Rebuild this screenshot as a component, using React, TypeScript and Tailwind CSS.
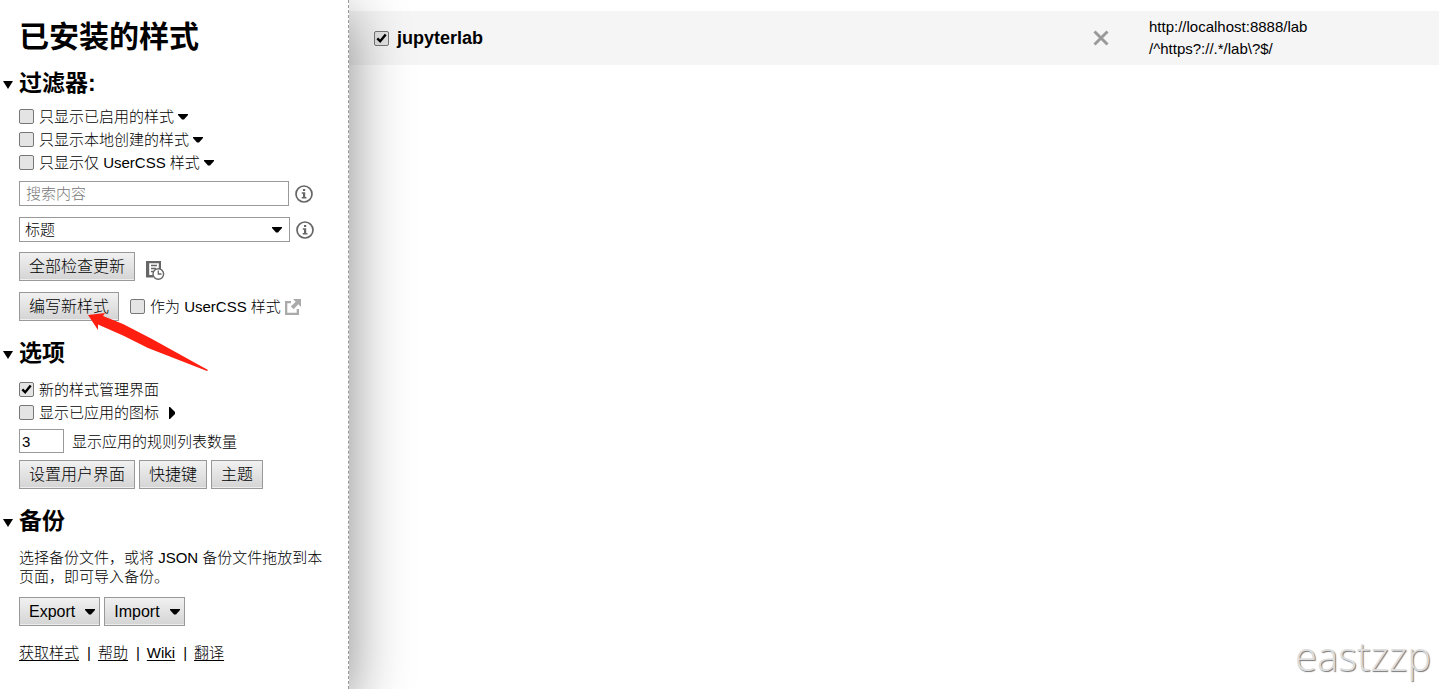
import type { ReactNode } from 'react';

const filters = ['只显示已启用的样式', '只显示本地创建的样式', '只显示仅 UserCSS 样式'];

const links = ['获取样式', '帮助', 'Wiki', '翻译'];

const styles = [
  { name: 'jupyterlab', targets: ['http://localhost:8888/lab', '/^https?://.*/lab\\?$/'] },
];

function Caret({ className = '' }: { className?: string }) {
  return (
    <svg viewBox="0 0 10 6" className={`h-1.5 w-2.5 shrink-0 ${className}`} aria-hidden="true">
      <path d="M0 0h10v1L6 5.500H4L0 1z" fill="#000" />
    </svg>
  );
}

function InfoIcon() {
  return (
    <svg viewBox="0 0 18 18" className="size-[18px]" fill="none" aria-hidden="true">
      <circle cx="9" cy="9" r="8" stroke="#666" strokeWidth="1.700" />
      <path d="M8 4h2.200v2H8zM6.800 7.300h3.400V12h1.200v1.400H6.700V12H8V8.700H6.800z" fill="#666" />
    </svg>
  );
}

function HistoryIcon() {
  return (
    <svg viewBox="0 0 20 20" className="size-5" fill="none" aria-hidden="true">
      <path d="M1 1h15v8h-2.200V3.200H4.200V15H8v2.500H1z" fill="#666" />
      <path d="M6 5.500h6M6 8.500h5M6 11.500h2.500" stroke="#666" strokeWidth="1.300" />
      <circle cx="13.300" cy="14" r="5.300" fill="#fff" stroke="#666" strokeWidth="1.400" />
      <path d="M13.300 10.500V14H16.500" stroke="#666" strokeWidth="1.300" />
    </svg>
  );
}

function ExternalIcon() {
  return (
    <svg viewBox="0 0 16 16" className="size-4" aria-hidden="true">
      <path d="M0 2h6v2.300H2.300v9.400h9.400V10H14v6H0z" fill="#aaa" />
      <path d="M8 0h8v8l-2.700-2.700L8.600 10.200 5.800 7.400l4.900-4.700z" fill="#aaa" />
    </svg>
  );
}

function Checkbox({ children, checked = false, bold = false }: { children: ReactNode; checked?: boolean; bold?: boolean }) {
  return (
    <label className={`flex items-center ${bold ? 'gap-2 text-lg leading-5 font-bold' : 'gap-[5px]'}`}>
      <span className="grid size-[15px] shrink-0">
        <input
          type="checkbox"
          defaultChecked={checked}
          className="peer col-start-1 row-start-1 size-[15px] appearance-none rounded-xs border border-[#777] bg-[#e4e4e4]"
        />
        <svg viewBox="0 0 15 15" fill="none" className="pointer-events-none invisible col-start-1 row-start-1 size-[15px] peer-checked:visible" aria-hidden="true">
          <path d="M3.300 7.300l2.900 3 5.500-6.800" stroke="#000" strokeWidth="2.400" />
        </svg>
      </span>
      <span>{children}</span>
    </label>
  );
}

function Button({ children, caret = false }: { children: ReactNode; caret?: boolean }) {
  return (
    <button
      type="button"
      className={`flex h-[29px] items-center border border-[#999] bg-linear-to-b from-[#f1f1f1] to-[#d4d4d4] pl-[9px] text-base leading-5 shadow-[inset_0_-1px_#eee] ${caret ? 'gap-2.5 pr-1' : 'pr-[9px]'}`}
    >
      {children}
      {caret && <Caret />}
    </button>
  );
}

function Section({ title, children, className = '' }: { title: string; children: ReactNode; className?: string }) {
  return (
    <details open className={className}>
      <summary className="-ml-4 flex list-none items-center gap-1.5">
        <svg viewBox="0 0 10 8" className="mt-1 h-2 w-2.5" aria-hidden="true">
          <path d="M0 0h10L5 8z" fill="#000" />
        </svg>
        <h2 className="text-[23px] leading-7 font-bold">{title}</h2>
      </summary>
      {children}
    </details>
  );
}

export default function App() {
  return (
    <div className="relative flex min-h-screen overflow-hidden bg-white font-['Liberation_Sans','Noto_Sans_CJK_SC',sans-serif] text-[15px] leading-[19px] font-light text-black">
      <aside className="z-10 w-[349px] shrink-0 border-r border-dashed border-[#999] px-[19px] pt-[17px] shadow-[0_16px_56px_0_rgba(0,0,0,0.48)] [clip-path:inset(0_-90px_0_0)]">
        <h1 className="text-3xl leading-10 font-bold">已安装的样式</h1>

        <Section title="过滤器:" className="mt-3">
          <div className="mt-2.5 flex flex-col gap-1">
            {filters.map((label) => (
              <div key={label} className="flex items-center gap-1">
                <Checkbox>{label}</Checkbox>
                <Caret />
              </div>
            ))}
          </div>
          <div className="mt-[9px] flex items-center gap-1.5">
            <input
              type="search"
              aria-label="搜索内容"
              placeholder="搜索内容"
              className="h-[25px] w-[270px] border border-[#999] px-1.5 placeholder:text-[#777]"
            />
            <InfoIcon />
          </div>
          <div className="mt-[11px] flex items-center gap-1.5">
            <div className="grid items-center">
              <select aria-label="标题" className="col-start-1 row-start-1 h-[25px] w-[271px] appearance-none border border-[#999] px-[5px]">
                <option>标题</option>
              </select>
              <Caret className="pointer-events-none col-start-1 row-start-1 mr-2 justify-self-end" />
            </div>
            <InfoIcon />
          </div>
          <div className="mt-2.5 flex items-center gap-2.5">
            <Button>全部检查更新</Button>
            <a href="#history" aria-label="更新历史" className="mt-1.5">
              <HistoryIcon />
            </a>
          </div>
          <div className="mt-[11px] flex items-center gap-[11px]">
            <Button>编写新样式</Button>
            <div className="flex items-center gap-1">
              <Checkbox>作为 UserCSS 样式</Checkbox>
              <a href="#usercss" aria-label="UserCSS">
                <ExternalIcon />
              </a>
            </div>
          </div>
        </Section>

        <Section title="选项" className="mt-[18px]">
          <div className="mt-[13px] flex flex-col gap-1">
            <Checkbox checked>新的样式管理界面</Checkbox>
            <div className="flex items-center gap-2.5">
              <Checkbox>显示已应用的图标</Checkbox>
              <svg viewBox="0 0 6 12" className="h-3 w-1.5" aria-hidden="true">
                <path d="M0 0h1l5 5v2l-5 5H0z" fill="#000" />
              </svg>
            </div>
          </div>
          <label className="mt-[7px] flex items-center gap-2">
            <input type="text" inputMode="numeric" defaultValue="3" className="h-6 w-[45px] border border-[#999] px-0.5" />
            显示应用的规则列表数量
          </label>
          <div className="mt-[7px] flex gap-1">
            <Button>设置用户界面</Button>
            <Button>快捷键</Button>
            <Button>主题</Button>
          </div>
        </Section>

        <Section title="备份" className="mt-[18px]">
          <p className="mt-[13px]">选择备份文件，或将 JSON 备份文件拖放到本页面，即可导入备份。</p>
          <div className="mt-[11px] flex gap-1">
            <Button caret>Export</Button>
            <Button caret>Import</Button>
          </div>
        </Section>

        <nav className="mt-[17px] flex">
          {links.map((link, i) => (
            <span key={link}>
              {i > 0 && <span className="mr-[7px] ml-2">|</span>}
              <a href="#" className="underline underline-offset-2">{link}</a>
            </span>
          ))}
        </nav>
      </aside>

      <main className="min-w-0 flex-1 pt-[11px]">
        <ul>
          {styles.map((style) => (
            <li key={style.name} className="flex items-center bg-[#f5f5f5] py-[5px] pl-[25px]">
              <div className="flex-1">
                <Checkbox checked bold>{style.name}</Checkbox>
              </div>
              <button type="button" aria-label="删除" className="mr-10">
                <svg viewBox="0 0 16 16" className="size-4" aria-hidden="true">
                  <path d="M1.500 1.500l13 13M14.500 1.500l-13 13" stroke="#999" strokeWidth="2.900" />
                </svg>
              </button>
              <div className="w-[290px] leading-[22px]">
                {style.targets.map((target) => (
                  <p key={target}>{target}</p>
                ))}
              </div>
            </li>
          ))}
        </ul>
      </main>

      {/* Pointer to the "write new style" button */}
      <svg viewBox="0 0 120 60" className="pointer-events-none absolute top-[312px] left-[88px] z-20 h-[60px] w-[120px]" aria-hidden="true">
        <path d="M0 3l17-2-2 3 20 8 29 15 56 31-1 1-59-23-25-12.500L10 12.500V18z" fill="#ff1e10" />
      </svg>

      <div className="pointer-events-none absolute right-2 bottom-1.5 font-['Open_Sans',sans-serif] text-[40px] leading-[54px] font-light text-[#dedede] [text-shadow:1px_1px_1px_#777]">
        eastzzp
      </div>
    </div>
  );
}
